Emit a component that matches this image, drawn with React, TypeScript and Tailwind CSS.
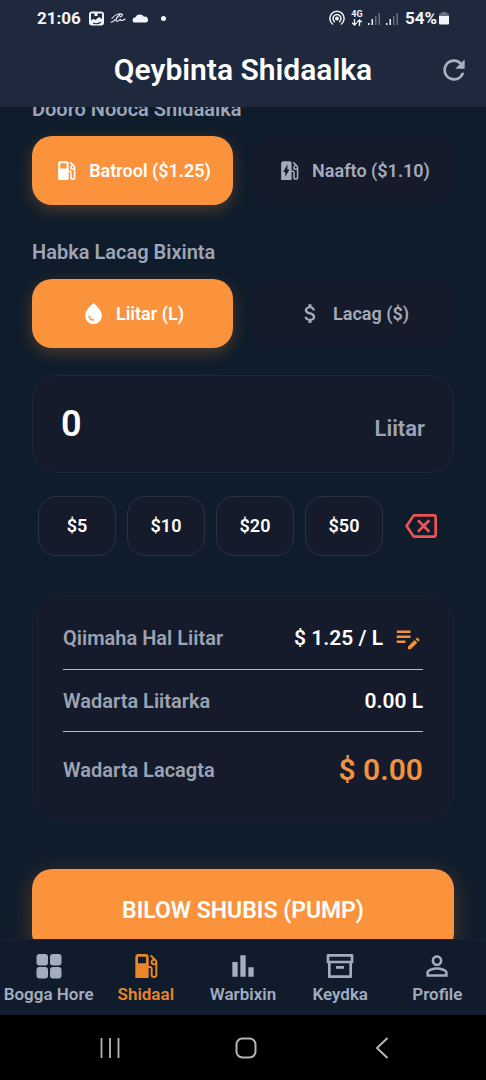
/**
 * App — fuel dispensing screen: fuel type, payment mode, amount entry,
 * quick amounts, price summary and the bottom navigation.
 */
import { useState } from 'react'
import type { ComponentType, ReactNode } from 'react'
import {
  MdAttachMoney,
  MdEditNote,
  MdEvStation,
  MdLocalGasStation,
  MdOutlineBackspace,
  MdPersonOutline,
  MdRefresh,
  MdWaterDrop,
} from 'react-icons/md'
import { RiArchiveLine } from 'react-icons/ri'

type IconType = ComponentType<{ size?: number | string }>

const PRICES = { batrool: 1.25, naafto: 1.1 }
const QUICK_AMOUNTS = [5, 10, 20, 50]

function GridIcon({ size = 24 }: { size?: number | string }) {
  return (
    <svg width={size} height={size} viewBox="0 0 32 32" fill="currentColor">
      <rect x="3.5" y="4" width="11.5" height="11.5" rx="3" />
      <rect x="17" y="4" width="11.5" height="11.5" rx="3" />
      <rect x="3.5" y="17" width="11.5" height="11.5" rx="3" />
      <rect x="17" y="17" width="11.5" height="11.5" rx="3" />
    </svg>
  )
}

function BarsIcon({ size = 24 }: { size?: number | string }) {
  return (
    <svg width={size} height={size} viewBox="0 0 24 24" fill="currentColor">
      <path d="M4 9h4v11H4zM16 13h4v7h-4zM10 4h4v16h-4z" />
    </svg>
  )
}

function SignalIcon() {
  return (
    <svg width="14" height="16" viewBox="0 0 14 16" fill="currentColor">
      <rect x="1" y="13" width="1.5" height="2" />
      <rect x="4.5" y="9" width="1.5" height="6" />
      <rect x="8" y="6" width="1.5" height="9" opacity=".35" />
      <rect x="11.5" y="3" width="1.5" height="12" opacity=".35" />
    </svg>
  )
}

function StatusBar() {
  return (
    <div className="flex items-center justify-between h-9 px-[37px] text-[#f1f5f9]">
      <div className="flex items-center">
        <span className="text-[17px] leading-5 font-bold">21:06</span>
        <svg className="ml-2" width="15" height="15" viewBox="0 0 15 15">
          <rect width="15" height="14" y=".5" rx="3" fill="currentColor" />
          <path d="M2 2.5h3.500v2.500H8.500V2.500H13V8L10 6 6.500 9 4.500 7.800 2 9.500z" fill="#1e293f" />
          <path d="M4 12c2 1 5 1 8-.8" stroke="#1e293f" strokeWidth="1.2" fill="none" />
        </svg>
        <svg className="ml-1.5" width="16" height="14" viewBox="0 0 16 14" fill="none" stroke="currentColor" strokeWidth="1.1" strokeLinecap="round">
          <path d="M2 7.500C4 4.500 8 2.500 11 2.800c2 .2 2 2-1 3.200M10.500 3C8 5 6 8 6 9.500c.5 1.800 3.500 0 4.500-1.500-.5 2 2 2 4.500 0M1 11c1.500.3 3-.8 4-2.500" />
        </svg>
        <svg className="ml-1.5" width="17" height="12" viewBox="0 0 17 12" fill="currentColor">
          <path d="M3 10.500a2.500 2.500 0 0 1 .2-5A5 5 0 0 1 12 4.800a3 3 0 0 1 2 5.700z" />
        </svg>
        <span className="ml-3 w-[5px] h-[5px] rounded-full bg-current" />
      </div>
      <div className="flex items-center">
        <svg width="16" height="16" viewBox="0 0 16 16" fill="none" stroke="currentColor" strokeWidth="1.5" strokeLinecap="round">
          <path d="M3.600 14A7.100 7.100 0 1 1 12.400 14" />
          <path d="M5.500 11.600A4 4 0 1 1 10.500 11.600" />
          <circle cx="8" cy="8.500" r="1.200" fill="currentColor" />
        </svg>
        <div className="flex flex-col items-center ml-1.5">
          <span className="text-[9px] leading-[9px] font-bold">4G</span>
          <svg width="12" height="7" viewBox="0 0 12 7" fill="none" stroke="currentColor" strokeWidth="1.3">
            <path d="M3.500 0v6M1.200 3.700l2.300 2.300 2.300-2.300M8.500 7V1M6.200 3.300 8.500 1l2.300 2.300" />
          </svg>
        </div>
        <span className="ml-1"><SignalIcon /></span>
        <span className="ml-1"><SignalIcon /></span>
        <span className="ml-1.5 text-[17px] leading-5 font-bold">54%</span>
        <svg className="ml-0.5" width="10" height="14" viewBox="0 0 10 14" fill="currentColor">
          <path d="M0 5V3.500Q0 2.500 2.500 2V1h5v1Q10 2.500 10 3.500V5z" opacity=".35" />
          <path d="M0 5h10v7.500q0 1-1 1H1q-1 0-1-1z" />
        </svg>
      </div>
    </div>
  )
}

interface OptionProps {
  icon: IconType
  active: boolean
  onClick: () => void
  children: ReactNode
}

function OptionButton({ icon: Icon, active, onClick, children }: OptionProps) {
  return (
    <button
      type="button"
      aria-pressed={active}
      onClick={onClick}
      className={`flex items-center justify-center gap-2.5 h-[69px] rounded-[20px] text-lg font-semibold whitespace-nowrap ${
        active
          ? 'bg-[#fb933c] text-white shadow-[0_5px_16px_rgba(251,147,60,0.25)]'
          : 'bg-[#151b2a] text-[#a6acba]'
      }`}
    >
      <Icon size={25} />
      {children}
    </button>
  )
}

function SummaryRow({ label, children }: { label: string; children: ReactNode }) {
  return (
    <div className="flex items-center justify-between min-h-[30px]">
      <dt className="text-xl leading-6 font-semibold text-[#9ca3b4]">{label}</dt>
      <dd className="flex items-center text-[21px] leading-6 font-semibold text-white">{children}</dd>
    </div>
  )
}

const NAV: { label: string; icon: IconType }[] = [
  { label: 'Bogga Hore', icon: GridIcon },
  { label: 'Shidaal', icon: MdLocalGasStation },
  { label: 'Warbixin', icon: BarsIcon },
  { label: 'Keydka', icon: RiArchiveLine },
  { label: 'Profile', icon: MdPersonOutline },
]

export default function App() {
  const [fuel, setFuel] = useState<'batrool' | 'naafto'>('batrool')
  const [mode, setMode] = useState<'liitar' | 'lacag'>('liitar')
  const [amount, setAmount] = useState('0')

  const price = PRICES[fuel]
  const value = Number(amount) || 0
  const liters = mode === 'liitar' ? value : value / price
  const total = mode === 'liitar' ? value * price : value

  return (
    <div className="flex flex-col h-screen bg-[#0f1c2b] font-['Roboto',sans-serif]">
      <header className="shrink-0 bg-[#1e293e]">
        <StatusBar />
        <div className="grid grid-cols-[40px_1fr_40px] items-center h-[71px] px-3 pb-1">
          <h1 className="col-start-2 text-center text-3xl font-semibold text-white whitespace-nowrap">Qeybinta Shidaalka</h1>
          <button type="button" aria-label="Refresh" className="flex justify-center text-[#a9b0c0]">
            <MdRefresh size={32} />
          </button>
        </div>
      </header>

      <main className="flex-1 min-h-0 px-8 overflow-hidden">
        <h2 className="-mt-2.5 text-xl leading-6 font-semibold text-[#9ca5b8]">Dooro Nooca Shidaalka</h2>
        <div className="grid grid-cols-2 gap-5 mt-[15px]">
          <OptionButton icon={MdLocalGasStation} active={fuel === 'batrool'} onClick={() => setFuel('batrool')}>
            Batrool ($1.25)
          </OptionButton>
          <OptionButton icon={MdEvStation} active={fuel === 'naafto'} onClick={() => setFuel('naafto')}>
            Naafto ($1.10)
          </OptionButton>
        </div>

        <h2 className="mt-[35px] text-xl leading-6 font-semibold text-[#9ca5b8]">Habka Lacag Bixinta</h2>
        <div className="grid grid-cols-2 gap-5 mt-[15px]">
          <OptionButton icon={MdWaterDrop} active={mode === 'liitar'} onClick={() => setMode('liitar')}>
            Liitar (L)
          </OptionButton>
          <OptionButton icon={MdAttachMoney} active={mode === 'lacag'} onClick={() => setMode('lacag')}>
            Lacag ($)
          </OptionButton>
        </div>

        <label className="flex items-baseline mt-[27px] px-7 pt-[26px] pb-[26px] bg-[#151b2a] border border-[#1d2735] rounded-[24px]">
          <input
            aria-label="Liitar"
            inputMode="decimal"
            value={amount}
            onChange={e => setAmount(e.target.value)}
            className="flex-1 min-w-0 h-11 bg-transparent outline-none text-4xl font-semibold text-white"
          />
          <span className="text-[22px] leading-6 font-semibold text-[#9ca5b8]">{mode === 'liitar' ? 'Liitar' : 'Lacag'}</span>
        </label>

        <div className="flex gap-[11px] mt-[23px] px-1.5">
          {QUICK_AMOUNTS.map(n => (
            <button
              key={n}
              type="button"
              onClick={() => setAmount(String(n))}
              className="flex-1 h-[60px] bg-[#151b2a] border border-[#2a3240] rounded-[18px] text-lg font-semibold text-white"
            >
              ${n}
            </button>
          ))}
          <button
            type="button"
            aria-label="Tirtir"
            onClick={() => setAmount('0')}
            className="flex items-center justify-center w-[54px] text-[#ee5253]"
          >
            <MdOutlineBackspace size={32} />
          </button>
        </div>

        <dl className="mt-9 p-[30px] bg-[#151b2a] border border-[#172231] rounded-[30px]">
          <SummaryRow label="Qiimaha Hal Liitar">
            $ {price.toFixed(2)} / L
            <button type="button" aria-label="Edit price" className="ml-2.5 text-[#f0923f]">
              <MdEditNote size={30} />
            </button>
          </SummaryRow>
          <hr className="my-4 border-[#b4bac6]" />
          <SummaryRow label="Wadarta Liitarka">{liters.toFixed(2)} L</SummaryRow>
          <hr className="mt-[15px] mb-4 border-[#b4bac6]" />
          <SummaryRow label="Wadarta Lacagta">
            <span className="text-3xl leading-[43px] text-[#f0923f]">$ {total.toFixed(2)}</span>
          </SummaryRow>
        </dl>

        <button
          type="button"
          className="w-full h-[84px] mt-[47px] bg-[#fb933c] rounded-[20px] text-[23px] font-semibold text-white shadow-[0_6px_26px_rgba(251,147,60,0.25)]"
        >
          BILOW SHUBIS (PUMP)
        </button>
      </main>

      <nav className="grid grid-cols-5 shrink-0 pt-2.5 pb-[11px] bg-[#101b2b] border-t border-[#182434]">
        {NAV.map(({ label, icon: Icon }) => (
          <a
            key={label}
            href="#"
            className={`flex flex-col items-center gap-0.5 text-[17px] leading-5 font-semibold whitespace-nowrap ${
              label === 'Shidaal' ? 'text-[#e8862a]' : 'text-[#a2adc0]'
            }`}
          >
            <Icon size={32} />
            {label}
          </a>
        ))}
      </nav>

      <div className="grid grid-cols-3 items-center justify-items-center shrink-0 h-[65px] pl-[42px] pr-9 bg-black text-[#b5b5b5]">
        <button type="button" aria-label="Recents">
          <svg width="24" height="24" viewBox="0 0 24 24" fill="none" stroke="currentColor" strokeWidth="1.8">
            <path d="M3.500 2v20M12 2v20M20.500 2v20" />
          </svg>
        </button>
        <button type="button" aria-label="Home">
          <svg width="24" height="24" viewBox="0 0 24 24" fill="none" stroke="currentColor" strokeWidth="2">
            <rect x="2.500" y="2.500" width="19" height="19" rx="6" />
          </svg>
        </button>
        <button type="button" aria-label="Back">
          <svg width="24" height="24" viewBox="0 0 24 24" fill="none" stroke="currentColor" strokeWidth="2">
            <path d="M17.500 2 7 12l10.500 10" />
          </svg>
        </button>
      </div>
    </div>
  )
}
